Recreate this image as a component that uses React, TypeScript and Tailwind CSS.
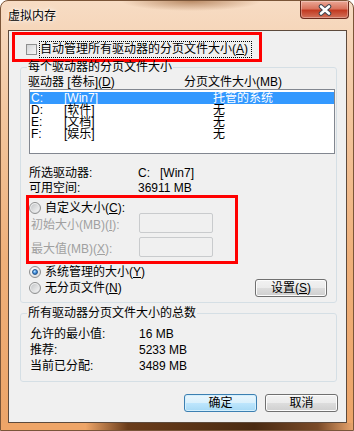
import React from 'react';

const drives = [
  { drive: 'C:', label: '[Win7]', size: '托管的系统', selected: true },
  { drive: 'D:', label: '[软件]', size: '无' },
  { drive: 'E:', label: '[文档]', size: '无' },
  { drive: 'F:', label: '[娱乐]', size: '无' },
];

const totals = [
  { name: '允许的最小值:', value: '16 MB' },
  { name: '推荐:', value: '5233 MB' },
  { name: '当前已分配:', value: '3489 MB' },
];

function Radio({ checked }: { checked?: boolean }) {
  return (
    <span className="flex h-[12px] w-[12px] shrink-0 items-center justify-center rounded-full border border-[#8e8f8f] bg-radial-[at_35%_30%] from-[#ffffff] to-[#d3d5d7]">
      {checked ? (
        <span className="h-[6px] w-[6px] rounded-full border border-[#24568c] bg-radial-[at_40%_35%] from-[#bfe6ff] via-[#3f8fe0] to-[#1b4f94]" />
      ) : (
        <span className="h-[8px] w-[8px] rounded-full bg-linear-to-br from-[#c4c6c8] to-[#f5f5f5]" />
      )}
    </span>
  );
}

function Button({ children, primary, width }: { children: React.ReactNode; primary?: boolean; width: string }) {
  return (
    <div
      className={
        primary
          ? `${width} flex h-[18px] items-center justify-center rounded-[3px] border border-[#3c7fb1] bg-[linear-gradient(#eaf6fd,#d9f0fc_50%,#bee6fd_50%,#a7d9f5)] shadow-[inset_0_0_0_1px_#d3effd] leading-[12px]`
          : `${width} flex h-[18px] items-center justify-center rounded-[3px] border border-[#707070] bg-[linear-gradient(#f2f2f2,#ebebeb_50%,#dddddd_50%,#cfcfcf)] shadow-[inset_0_0_0_1px_#fcfcfc] leading-[12px]`
      }
    >
      {children}
    </div>
  );
}

function SizeInput({ label }: { label: React.ReactNode }) {
  return (
    <div className="flex h-[20px] items-start">
      <span className="mt-[6px] w-[110px] pl-[2px] leading-[12px] text-[#a0a0a0]">{label}</span>
      <span className="h-[20px] w-[74px] rounded-[2px] border border-[#c9cbcd] bg-[#f0f0f0]" />
    </div>
  );
}

export default function App() {
  return (
    <div className="flex h-[431px] w-[354px] flex-col overflow-hidden rounded-t-[8px] border border-[#7a5538] bg-[linear-gradient(#f7dcc4,#f3c7a0_25%,#efb07a_60%,#eca468)] font-['Liberation_Sans','Noto_Sans_CJK_SC',sans-serif] text-[12px] text-black">
      {/* Title bar */}
      <div className="flex h-[29px] shrink-0 items-start justify-between bg-[radial-gradient(ellipse_70px_10px_at_190px_0px,#b98b66,transparent)]">
        <span className="ml-[7px] mt-[9px] leading-[13px] [text-shadow:0_0_6px_#fff,0_0_3px_#fff]">虚拟内存</span>
        <div className="mr-[4px] flex h-[18px] w-[49px] items-center justify-center rounded-b-[4px] border border-t-0 border-[#6b2a1c] bg-[linear-gradient(#eba896,#d9745e_45%,#c23b22_55%,#d2725a)] shadow-[inset_0_0_0_1px_rgba(255,255,255,0.3)]">
          <svg width="14" height="12" viewBox="0 0 14 12">
            <path d="M3 2.5 L11 9.5 M11 2.5 L3 9.5" stroke="#3e4650" strokeWidth="4.6" strokeLinecap="round" />
            <path d="M3 2.5 L11 9.5 M11 2.5 L3 9.5" stroke="#ffffff" strokeWidth="2.6" strokeLinecap="round" />
          </svg>
        </div>
      </div>

      {/* Client area */}
      <div className="ml-[7px] mr-[6px] flex flex-1 flex-col border border-[#5d4a3c] bg-[#f0f0f0]">
        {/* Auto-manage checkbox (highlighted) */}
        <div className="ml-[3px] mt-[1px] flex h-[30px] w-[250px] items-start border-[3px] border-[#ff0000]">
          <span className="ml-[11px] mt-[9px] h-[11px] w-[11px] shrink-0 border border-[#8e8f8f] bg-linear-to-br from-[#d2d4d6] to-[#f8f8f8]" />
          <span className="ml-[2px] mt-[6px] border border-dotted border-black pr-[3px] leading-[15px]">
            自动管理所有驱动器的分页文件大小(<u>A</u>)
          </span>
        </div>

        {/* Per-drive group */}
        <fieldset className="ml-[11px] mr-[9px] mt-[-2px] rounded-[3px] border border-[#d5dfe5] pb-[5px]">
          <legend className="ml-[6px] px-[1px] leading-[14px]">每个驱动器的分页文件大小</legend>
          <div className="mt-[2px] flex h-[12px] pl-[7px] leading-[12px]">
            <span className="w-[156px]">驱动器 [卷标](<u>D</u>)</span>
            <span>分页文件大小(MB)</span>
          </div>
          <div className="ml-[8px] mr-[1px] mt-[1px] h-[65px] border border-[#828790] bg-white pt-[2px]">
            {drives.map((d) => (
              <div
                key={d.drive}
                className={d.selected ? 'flex h-[12px] bg-[#3399ff] pl-[1px] leading-[12px] text-white' : 'flex h-[12px] pl-[1px] leading-[12px]'}
              >
                <span className="w-[33px]">{d.drive}</span>
                <span className="w-[149px]">{d.label}</span>
                <span>{d.size}</span>
              </div>
            ))}
          </div>
          <div className="mt-[13px] grid grid-cols-[109px_1fr] gap-y-[3px] pl-[8px] leading-[12px]">
            <span>所选驱动器:</span>
            <span>C:&nbsp;&nbsp;&nbsp;[Win7]</span>
            <span>可用空间:</span>
            <span>36911 MB</span>
          </div>

          {/* Custom size (highlighted) */}
          <div className="ml-[5px] mt-[1px] flex h-[69px] w-[212px] flex-col border-[3px] border-[#ff0000]">
            <div className="mt-[4px] flex h-[12px] items-center">
              <Radio />
              <span className="ml-[4px] leading-[12px]">自定义大小(<u>C</u>):</span>
            </div>
            <div className="mt-[-1px]">
              <SizeInput label={<>初始大小(MB)(<u>I</u>):</>} />
            </div>
            <div className="mt-[4px]">
              <SizeInput label={<>最大值(MB)(<u>X</u>):</>} />
            </div>
          </div>

          <div className="mt-[2px] flex h-[12px] items-center pl-[8px]">
            <Radio checked />
            <span className="ml-[4px] leading-[12px]">系统管理的大小(<u>Y</u>)</span>
          </div>
          <div className="mt-[1px] flex h-[18px] items-center justify-between pl-[8px] pr-[9px]">
            <div className="flex items-center">
              <Radio />
              <span className="ml-[4px] leading-[12px]">无分页文件(<u>N</u>)</span>
            </div>
            <Button width="w-[72px]">设置(<u>S</u>)</Button>
          </div>
        </fieldset>

        {/* Totals group */}
        <fieldset className="ml-[11px] mr-[9px] mt-[3px] rounded-[3px] border border-[#d5dfe5] pb-[7px] pt-[6px]">
          <legend className="ml-[6px] px-[1px] leading-[14px]">所有驱动器分页文件大小的总数</legend>
          <div className="grid grid-cols-[109px_1fr] pl-[9px] leading-[16px]">
            {totals.map((t) => (
              <React.Fragment key={t.name}>
                <span>{t.name}</span>
                <span>{t.value}</span>
              </React.Fragment>
            ))}
          </div>
        </fieldset>

        <div className="mt-[12px] flex justify-end gap-[8px] pr-[8px]">
          <Button primary width="w-[73px]">确定</Button>
          <Button width="w-[73px]">取消</Button>
        </div>
      </div>

      {/* Bottom frame edge */}
      <div className="h-[7px] shrink-0 bg-[linear-gradient(to_right,#eea568_0%,#eea568_24%,#6a3c1a_36%,#4a2a12_72%,#7a4a28_90%,#e8a46c_100%)]" />
    </div>
  );
}
